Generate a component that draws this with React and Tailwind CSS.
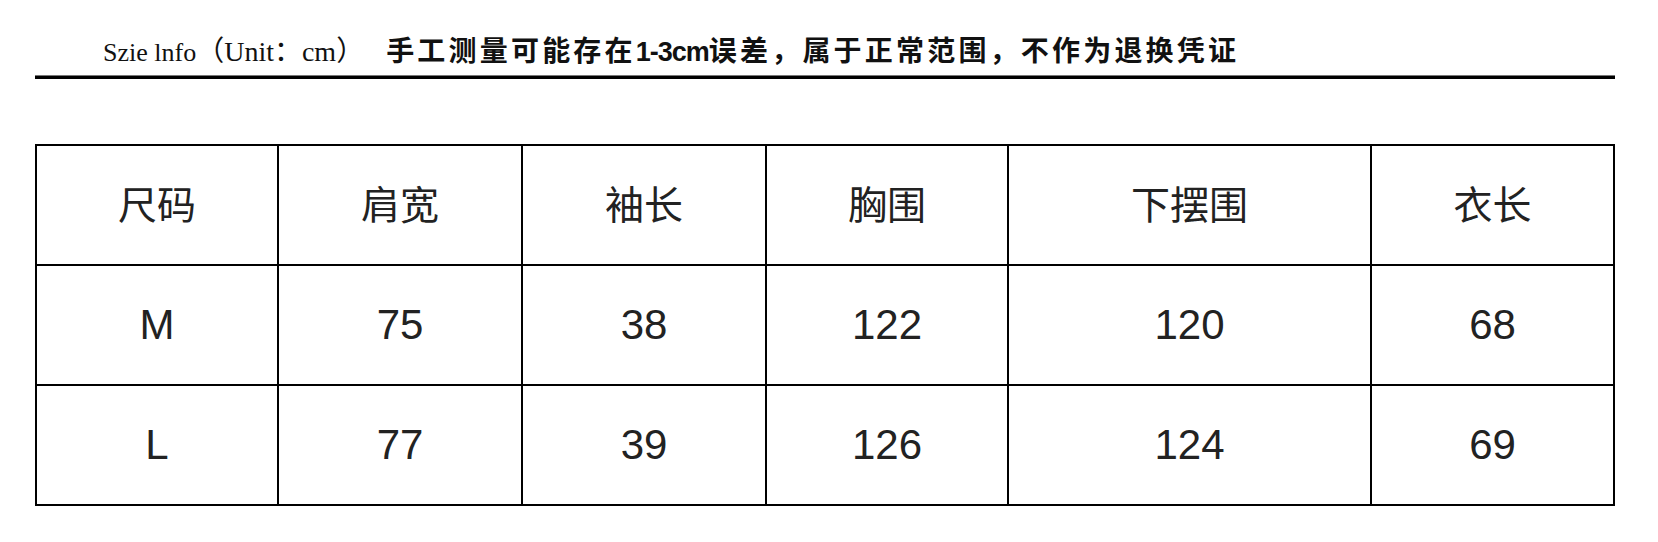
import React from "react";

const cjk = "font-['Noto_Sans_CJK_SC',sans-serif]";
const serif = "font-['Liberation_Serif','Noto_Sans_CJK_SC',serif]";
const cell = "font-['Liberation_Sans','Noto_Sans_CJK_SC',sans-serif]";

const heads = ["尺码", "肩宽", "袖长", "胸围", "下摆围", "衣长"];
const rows = [
    ["M", "75", "38", "122", "120", "68"],
    ["L", "77", "39", "126", "124", "69"],
];

export default function App() {
    return (
        <main className="w-[1658px] h-[542px] bg-white overflow-hidden">
            {/* title line */}
            <div className="flex items-baseline pt-[35px] pl-[103px] h-[65px] leading-none text-[#111]">
                <span className={`${serif} text-[26px]`}>Szie lnfo</span>
                <span className={`${serif} text-[28px]`}>（Unit：cm）</span>
                <span className={`${cjk} text-[28px] font-bold tracking-[3.2px] ml-[22px]`}>手工测量可能存在</span>
                <span className="font-['Liberation_Sans',sans-serif] text-[27px] font-semibold tracking-[-1px]">1-3cm</span>
                <span className={`${cjk} text-[28px] font-bold tracking-[3.2px]`}>误差，属于正常范围，不作为退换凭证</span>
            </div>
            <div className="mt-[10px] ml-[35px] w-[1580px] h-[4px] bg-black border-t border-[#777]"></div>

            {/* size table */}
            <div className="mt-[65px] ml-[35px] w-[1580px] grid grid-cols-[242px_244px_244px_242px_363px_243px] grid-rows-[120px_120px_120px] border-l-2 border-t-2 border-black">
                {heads.map((h) => (
                    <div key={h} className={`${cell} flex items-center justify-center border-r-2 border-b-2 border-black text-[39px] leading-none text-[#222]`}>
                        {h}
                    </div>
                ))}
                {rows.map((r, i) =>
                    r.map((v, j) => (
                        <div key={i + "-" + j} className={`${cell} flex items-center justify-center border-r-2 border-b-2 border-black text-[42px] leading-none text-[#222]`}>
                            {v}
                        </div>
                    ))
                )}
            </div>
        </main>
    );
}
